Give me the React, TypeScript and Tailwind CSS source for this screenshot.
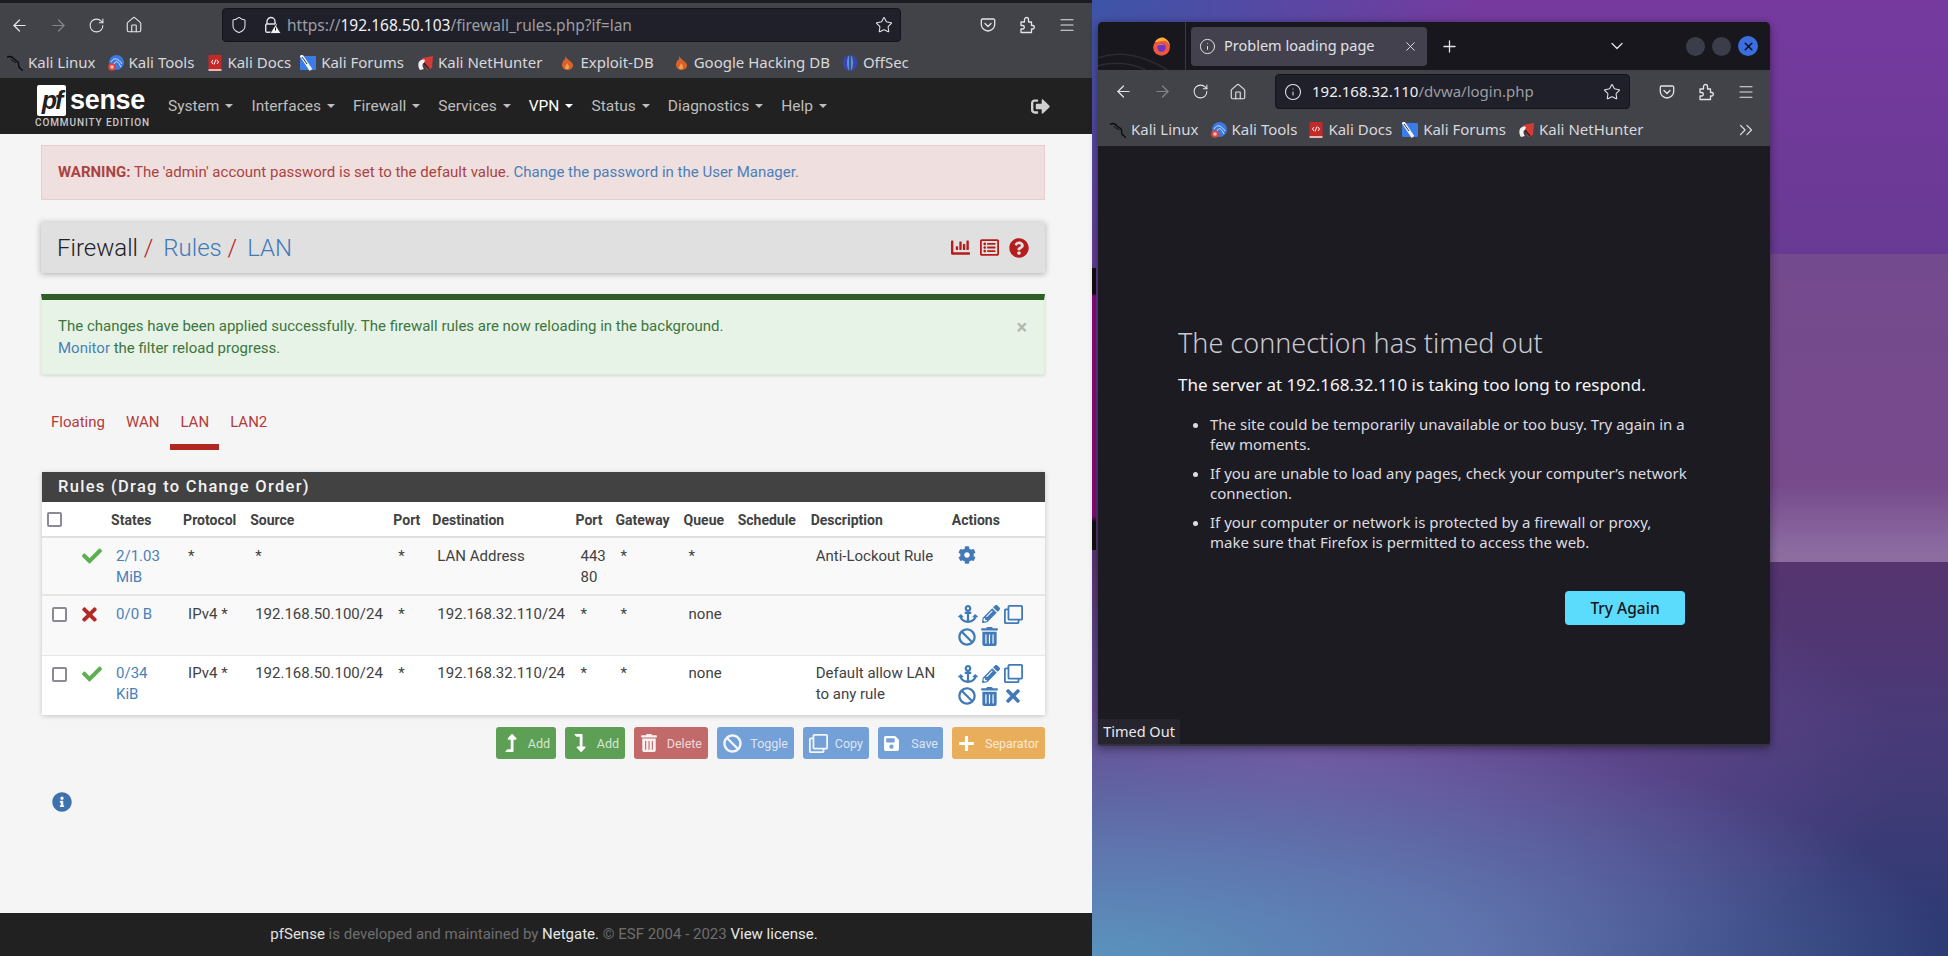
import { ArrowLeft, ArrowRight, ChevronDown, ChevronsRight, House, Info, Menu, Plus, RotateCw, Shield, Star, X } from 'lucide-react'
import {
    FaAnchor, FaBan, FaChartBar, FaCheck, FaCog, FaInfoCircle, FaLevelDownAlt, FaLevelUpAlt, FaPencilAlt,
    FaPlus, FaQuestionCircle, FaRegClone, FaRegListAlt, FaSave, FaSignOutAlt, FaTimes, FaTrashAlt,
} from 'react-icons/fa'
import type { ReactNode } from 'react'

/* bookmark favicons */
const KaliIcon = () => (
    <svg viewBox="0 0 16 16" className="h-4 w-4 shrink-0" fill="none" stroke="#0c0c10" strokeWidth="1.4" strokeLinecap="round">
        <path d="M0.5 2 C3 1 5 1.5 6.5 3.5 C8 5.5 10 5.5 11 7 C12.5 9 11 10.5 12 12 C13 13.5 14.5 14 15.5 15.5" />
        <path d="M4 4.5 C5.5 6 7 7 9 7.5" strokeWidth="1" />
    </svg>
)
const ToolsIcon = () => (
    <svg viewBox="0 0 16 16" className="h-4 w-4 shrink-0">
        <circle cx="8.5" cy="7.5" r="7.5" fill="#3b78e0" />
        <path d="M3 7 C6 2 10 3 14 9 M6 9 C8 5 10 6 13 12" stroke="#cfe0fb" strokeWidth="1" fill="none" />
        <circle cx="4" cy="12" r="3.8" fill="#e0433a" />
        <rect x="2.5" y="10.5" width="3" height="3" fill="#f5c8c4" />
    </svg>
)
const DocsIcon = () => (
    <svg viewBox="0 0 14 16" className="h-4 w-[14px] shrink-0">
        <rect x="0.5" y="0" width="13" height="14" rx="1" fill="#c62828" />
        <rect x="0.5" y="14" width="13" height="2" fill="#e8b7b0" />
        <path d="M5 5 L3.5 7 L5 9 M9 5 L10.5 7 L9 9 M8 4.5 L6 9.5" stroke="#fff" strokeWidth="1" fill="none" />
    </svg>
)
const ForumsIcon = () => (
    <svg viewBox="0 0 16 16" className="h-4 w-4 shrink-0">
        <rect x="0" y="1" width="16" height="14" rx="1" fill="#3a7de8" />
        <path d="M1 0 L11 15" stroke="#f2f2f2" strokeWidth="3.2" />
        <path d="M2 2 L7 9" stroke="#333" strokeWidth="1" />
    </svg>
)
const HunterIcon = () => (
    <svg viewBox="0 0 16 16" className="h-4 w-4 shrink-0">
        <path d="M5 3 L16 1 L15 13 L10 15 Z" fill="#d23b36" />
        <path d="M3 15 C-1 9 3 3 8 5 L7 8 C5 8 5 12 7 14 Z" fill="#f3f3f3" />
        <path d="M7 8 L12 14" stroke="#222" strokeWidth="1.2" />
    </svg>
)
const FlameIcon = () => (
    <svg viewBox="0 0 16 16" className="h-4 w-4 shrink-0">
        <path d="M6 1 C7 4 13 6 14 10 C14.5 13 11 15 8 15 C5 15 3 12 3 10 C3 8 4 7 4.5 5 C5.5 6 6.5 4 6 1 Z" fill="#d9622b" />
        <path d="M8 8 C9 10 10.5 11 10 13 C9 14.5 6.5 14.5 6 13 C5.5 11.5 7.5 10.5 8 8 Z" fill="#f0a24b" />
    </svg>
)
const OffSecIcon = () => (
    <svg viewBox="0 0 16 16" className="h-4 w-4 shrink-0">
        <ellipse cx="8" cy="8" rx="7.5" ry="8" fill="#3a45a8" />
        <ellipse cx="8" cy="8" rx="3" ry="8" fill="#5f8fe0" />
        <path d="M8 0 V16" stroke="#1c1b22" strokeWidth="1" />
    </svg>
)
const FirefoxIcon = () => (
    <svg viewBox="0 0 20 20" className="h-[19px] w-[19px]">
        <circle cx="10" cy="11" r="8.8" fill="#f0563a" />
        <path d="M3 5 C6 1 10 0 13 1 C17 3 19.5 7 18.8 11 C18 6 15 4 13 4 C9 4 6 6 3 5 Z" fill="#ffb02e" />
        <circle cx="10" cy="11" r="4.4" fill="#6a35c9" />
        <path d="M6 9 C8 6 12 7 13 9 C11 8 8 8 6 9 Z" fill="#ff8a3c" />
    </svg>
)

/* toolbar glyphs that the icon packages draw differently */
const PocketIcon = () => (
    <svg viewBox="0 0 16 16" className="h-4 w-4" fill="none" stroke="currentColor" strokeWidth="1.3" strokeLinecap="round" strokeLinejoin="round">
        <path d="M2.5 2 H13.5 A1.2 1.2 0 0 1 14.7 3.2 V7.5 C14.7 11 11.5 14 8 14 C4.5 14 1.3 11 1.3 7.5 V3.2 A1.2 1.2 0 0 1 2.5 2 Z" />
        <path d="M5 6.5 L8 9.5 L11 6.5" />
    </svg>
)
const ExtensionIcon = () => (
    <svg viewBox="0 0 18 18" className="h-[18px] w-[18px]" fill="none" stroke="currentColor" strokeWidth="1.3" strokeLinejoin="round">
        <path d="M3 6 H6.5 V3.5 A2 2 0 0 1 10.5 3.5 V6 H13.5 V9.5 H15 A1.8 1.8 0 0 1 15 13 H13.5 V16.5 H3 V13 H5 A1.8 1.8 0 0 0 5 9.5 H3 Z" />
    </svg>
)
const LockWarnIcon = () => (
    <svg viewBox="0 0 18 18" className="h-[18px] w-[18px]">
        <path d="M4 8 V5.5 A4 4 0 0 1 12 5.5 V8" fill="none" stroke="#e2e2e6" strokeWidth="1.4" />
        <rect x="2.7" y="8" width="10.6" height="8.3" rx="1.4" fill="none" stroke="#e2e2e6" strokeWidth="1.4" />
        <path d="M12.5 8.5 L18 17.5 H7 Z" fill="#f2f2f4" stroke="#1c1b22" strokeWidth="0.8" />
        <rect x="12" y="11.5" width="1" height="3" fill="#1c1b22" />
    </svg>
)

function Bookmark({ icon, label, gap }: { icon: ReactNode; label: string; gap: string }) {
    return (
        <div className={`flex items-center gap-[5px] ${gap}`}>
            {icon}
            <span className="whitespace-nowrap">{label}</span>
        </div>
    )
}

function RuleActions({ remove }: { remove?: boolean }) {
    return (
        <div className="text-[#427ab8]">
            <div className="flex h-[24px] items-center gap-[4px]">
                <FaAnchor size={20} />
                <FaPencilAlt size={18} />
                <FaRegClone size={19} />
            </div>
            <div className="flex h-[21px] items-center gap-[4px]">
                <FaBan size={18} />
                <FaTrashAlt size={19} />
                {remove && <FaTimes size={20} />}
            </div>
        </div>
    )
}

const headers = [
    ['States', 'w-[72px]'], ['Protocol', 'w-[67px]'], ['Source', 'w-[143px]'], ['Port', 'w-[39px]'],
    ['Destination', 'w-[143px]'], ['Port', 'w-[40px]'], ['Gateway', 'w-[68px]'], ['Queue', 'w-[54px]'],
    ['Schedule', 'w-[73px]'], ['Description', 'w-[141px]'], ['Actions', 'w-[97px]'],
]

const rows = [
    {
        rowClass: 'h-[58px] bg-[#f9f9f9] border-t-[2px] border-[#e0e0e0]',
        cellTop: 'pt-[8px]',
        checkbox: false,
        ok: true,
        states: ['2/1.03', 'MiB'],
        proto: '*', source: '*', port: '*', dest: 'LAN Address', dport: ['443', '80'], gw: '*', queue: '*',
        desc: ['Anti-Lockout Rule'],
    },
    {
        rowClass: 'h-[60px] bg-[#f9f9f9] border-t-[2px] border-[#e6e6e6]',
        cellTop: 'pt-[8px]',
        checkbox: true,
        ok: false,
        states: ['0/0 B'],
        proto: 'IPv4 *', source: '192.168.50.100/24', port: '*', dest: '192.168.32.110/24', dport: ['*'], gw: '*', queue: 'none',
        desc: [],
    },
    {
        rowClass: 'h-[60px] bg-white border-t border-[#e6e6e6]',
        cellTop: 'pt-[7px]',
        checkbox: true,
        ok: true,
        remove: true,
        states: ['0/34', 'KiB'],
        proto: 'IPv4 *', source: '192.168.50.100/24', port: '*', dest: '192.168.32.110/24', dport: ['*'], gw: '*', queue: 'none',
        desc: ['Default allow LAN', 'to any rule'],
    },
]

const navItems = ['System', 'Interfaces', 'Firewall', 'Services', 'VPN', 'Status', 'Diagnostics', 'Help']

function PfSenseBrowser() {
    return (
        <div className="flex h-[956px] w-[1092px] shrink-0 flex-col bg-[#f5f5f5] font-['Roboto',sans-serif] text-[15px] leading-[21px] text-[#424242]">
            {/* Firefox chrome */}
            <div className="h-[3px] bg-[#1c1b22]" />
            <div className="bg-[#424349] font-['Noto_Sans',sans-serif]">
                <div className="relative flex h-[44px] items-center text-[#e4e4e8]">
                    <div className="ml-[10px] flex w-[212px] items-center">
                        <ArrowLeft size={19} strokeWidth={1.5} />
                        <ArrowRight size={19} strokeWidth={1.5} className="ml-[20px] text-[#85858c]" />
                        <RotateCw size={17} strokeWidth={1.5} className="ml-[20px]" />
                        <House size={18} strokeWidth={1.5} className="ml-[20px]" />
                    </div>
                    <div className="flex h-[34px] w-[679px] items-center rounded border border-[#15141a] bg-[#1f2029] pl-[7px] pr-[7px]">
                        <Shield size={18} strokeWidth={1.4} />
                        <span className="ml-[15px]"><LockWarnIcon /></span>
                        <span className="ml-[6px] text-[15.5px] text-[#9d9da3]">https://<span className="text-[#f0f0f3]">192.168.50.103</span>/firewall_rules.php?if=lan</span>
                        <Star size={18} strokeWidth={1.4} className="ml-auto" />
                    </div>
                    <div className="ml-[79px] flex items-center gap-[22px]">
                        <PocketIcon />
                        <ExtensionIcon />
                        <Menu size={18} strokeWidth={1.5} />
                    </div>
                </div>
                <div className="flex h-[31px] items-center pl-[7px] text-[15px] text-[#d8d8dc]">
                    <Bookmark icon={<KaliIcon />} label="Kali Linux" gap="mr-[12px]" />
                    <Bookmark icon={<ToolsIcon />} label="Kali Tools" gap="mr-[14px]" />
                    <Bookmark icon={<DocsIcon />} label="Kali Docs" gap="mr-[9px]" />
                    <Bookmark icon={<ForumsIcon />} label="Kali Forums" gap="mr-[13px]" />
                    <Bookmark icon={<HunterIcon />} label="Kali NetHunter" gap="mr-[17px]" />
                    <Bookmark icon={<FlameIcon />} label="Exploit-DB" gap="mr-[19px]" />
                    <Bookmark icon={<FlameIcon />} label="Google Hacking DB" gap="mr-[12px]" />
                    <Bookmark icon={<OffSecIcon />} label="OffSec" gap="" />
                </div>
            </div>

            {/* pfSense navbar */}
            <nav className="flex h-[56px] items-center bg-[#212121] pr-[42px]">
                <div className="ml-[35px] w-[122px] shrink-0">
                    <div className="flex h-[34px] items-center pl-[2px]">
                        <div className="flex h-[31px] w-[29px] items-center justify-center rounded-[2px] bg-white font-['Liberation_Sans',sans-serif] text-[25px] font-bold italic leading-none tracking-[-2px] text-[#212121]">pf</div>
                        <span className="ml-[4px] font-['Liberation_Sans',sans-serif] text-[27px] font-bold leading-none tracking-[-0.3px] text-white">sense</span>
                    </div>
                    <div className="font-['Roboto',sans-serif] text-[10px] font-medium leading-[12px] tracking-[0.9px] whitespace-nowrap text-[#c8c8c8]">COMMUNITY EDITION</div>
                </div>
                <ul className="ml-[11px] flex items-center gap-[18px] text-[15.5px] text-[#bdbdbd]">
                    {navItems.map((item) => (
                        <li key={item} className={`flex items-center gap-[6px] ${item === 'VPN' ? 'text-white' : ''}`}>
                            {item}
                            <span className="h-0 w-0 border-x-[4px] border-t-[4px] border-x-transparent border-t-current" />
                        </li>
                    ))}
                </ul>
                <FaSignOutAlt size={19} className="ml-auto text-[#d0d0d0]" />
            </nav>

            {/* page */}
            <main className="flex flex-1 flex-col pl-[41px] pr-[47px]">
                <div className="mt-[11px] flex h-[55px] items-center border border-[#ebcccc] bg-[#f0dfdf] pl-[16px] pb-[1px] text-[#a94442]">
                    <p><strong className="font-bold">WARNING:</strong> The 'admin' account password is set to the default value. <a className="text-[#4a7fb8]">Change the password in the User Manager.</a></p>
                </div>

                <div className="mt-[22px] flex h-[51px] items-center bg-[#e0e0e0] pl-[16px] pr-[16px] shadow-[0_1px_6px_rgba(0,0,0,0.3)]">
                    <h1 className="text-[24px] font-light leading-none text-[#212121]">
                        Firewall <span className="text-[#b71c1c]">/</span>
                        <a className="ml-[10px] text-[#427ab8]">Rules</a> <span className="text-[#b71c1c]">/</span>
                        <a className="ml-[10px] text-[#427ab8]">LAN</a>
                    </h1>
                    <div className="ml-auto flex items-center gap-[10px] text-[#b71c1c]">
                        <FaChartBar size={19} />
                        <FaRegListAlt size={19} />
                        <FaQuestionCircle size={20} />
                    </div>
                </div>

                <div className="relative mt-[21px] h-[81px] border-x border-b border-t-[6px] border-x-[#e0eedb] border-b-[#dcebd4] border-t-[#2f5f27] bg-[#e8f3e7] pl-[16px] pt-[15px] leading-[22px] text-[#3c763d] shadow-[0_1px_3px_rgba(0,0,0,0.12)]">
                    <p>The changes have been applied successfully. The firewall rules are now reloading in the background.</p>
                    <p><a className="text-[#4a7fb8]">Monitor</a> the filter reload progress.</p>
                    <span className="absolute right-[17px] top-[16px] text-[20px] font-bold text-[#b0b8b0]">×</span>
                </div>

                <div className="mt-[25px] flex gap-[1px] text-[#b53a3a]">
                    {['Floating', 'WAN', 'LAN', 'LAN2'].map((tab) => (
                        <a key={tab} className={`h-[50px] border-b-[6px] px-[10px] pt-[12px] ${tab === 'LAN' ? 'border-[#b0281f]' : 'border-transparent'}`}>{tab}</a>
                    ))}
                </div>

                <section className="mt-[22px] ml-[1px] bg-white shadow-[0_1px_5px_rgba(0,0,0,0.2)]">
                    <h2 className="flex h-[30px] items-center bg-[#424242] pb-[1px] pl-[16px] text-[16.5px] font-medium tracking-[1.3px] text-[#f2f2f2]">Rules (Drag to Change Order)</h2>
                    <table className="w-full table-fixed border-collapse">
                        <colgroup>
                            <col className="w-[24px]" />
                            <col className="w-[41px]" />
                            {headers.map(([label, width], i) => <col key={i} className={width} aria-label={label} />)}
                        </colgroup>
                        <thead>
                            <tr className="h-[35px] text-[14px]">
                                <th className="pl-[5px] text-left" colSpan={2}>
                                    <span className="block h-[15px] w-[15px] rounded-[2px] border-2 border-[#8a8a99] bg-white" />
                                </th>
                                {headers.map(([label], i) => (
                                    <th key={i} className="pl-[4px] pt-[3px] text-left font-bold whitespace-nowrap">{label}</th>
                                ))}
                            </tr>
                        </thead>
                        <tbody className="align-top">
                            {rows.map((row, i) => (
                                <tr key={i} className={row.rowClass}>
                                    <td className="pl-[10px] pt-[11px]">
                                        {row.checkbox && <span className="block h-[15px] w-[15px] rounded-[2px] border-2 border-[#8a8a99] bg-white" />}
                                    </td>
                                    <td className="pl-[13px] pt-[8px]">
                                        {row.ok ? <FaCheck size={20} className="ml-[3px] text-[#5cb050]" /> : <FaTimes size={21} className="text-[#b22a25]" />}
                                    </td>
                                    <td className={`pl-[9px] text-[#4a7fb8] ${row.cellTop}`}>{row.states.map((s) => <div key={s}>{s}</div>)}</td>
                                    <td className={`pl-[9px] ${row.cellTop}`}>{row.proto}</td>
                                    <td className={`pl-[9px] ${row.cellTop}`}>{row.source}</td>
                                    <td className={`pl-[9px] ${row.cellTop}`}>{row.port}</td>
                                    <td className={`pl-[9px] whitespace-nowrap ${row.cellTop}`}>{row.dest}</td>
                                    <td className={`pl-[9px] ${row.cellTop}`}>{row.dport.map((p) => <div key={p}>{p}</div>)}</td>
                                    <td className={`pl-[9px] ${row.cellTop}`}>{row.gw}</td>
                                    <td className={`pl-[9px] ${row.cellTop}`}>{row.queue}</td>
                                    <td />
                                    <td className={`pl-[9px] whitespace-nowrap ${row.cellTop}`}>{row.desc.map((d) => <div key={d}>{d}</div>)}</td>
                                    <td className="pl-[10px] pt-[6px]">
                                        {i === 0 ? <FaCog size={18} className="mt-[2px] text-[#427ab8]" /> : <RuleActions remove={row.remove} />}
                                    </td>
                                </tr>
                            ))}
                        </tbody>
                    </table>
                </section>

                <div className="mt-[12px] flex justify-end gap-[9px] text-[12.5px] text-white/75">
                    <button className="flex h-[32px] w-[60px] items-center justify-between rounded-[3px] bg-[#5d9f55] px-[6px]"><FaLevelUpAlt size={18} className="text-white" />Add</button>
                    <button className="flex h-[32px] w-[60px] items-center justify-between rounded-[3px] bg-[#5d9f55] px-[6px]"><FaLevelDownAlt size={18} className="text-white" />Add</button>
                    <button className="flex h-[32px] w-[74px] items-center justify-between rounded-[3px] bg-[#c26a6a] px-[6px]"><FaTrashAlt size={18} className="text-white/90" />Delete</button>
                    <button className="flex h-[32px] w-[77px] items-center justify-between rounded-[3px] bg-[#74a0d8] px-[6px]"><FaBan size={19} className="text-white/90" />Toggle</button>
                    <button className="flex h-[32px] w-[66px] items-center justify-between rounded-[3px] bg-[#74a0d8] px-[6px]"><FaRegClone size={19} className="text-white/90" />Copy</button>
                    <button className="flex h-[32px] w-[65px] items-center justify-between rounded-[3px] bg-[#74a0d8] px-[5px]"><FaSave size={17} className="text-white" />Save</button>
                    <button className="flex h-[32px] w-[93px] items-center justify-between rounded-[3px] bg-[#e8ae5c] px-[6px]"><FaPlus size={17} className="text-white" />Separator</button>
                </div>

                <FaInfoCircle size={20} className="ml-[11px] mt-[33px] text-[#3d72ae]" />
            </main>

            <footer className="flex h-[43px] items-center justify-center bg-[#212121] pr-[4px] text-[#6e6e6e]">
                <p><span className="text-[#e0e0e0]">pfSense</span> is developed and maintained by <a className="text-[#e8e8e8]">Netgate.</a> © ESF 2004 - 2023 <a className="text-[#e8e8e8]">View license.</a></p>
            </footer>
        </div>
    )
}

function TimedOutBrowser() {
    return (
        <div className="ml-[2px] mt-[22px] flex h-[724px] w-[672px] shrink-0 flex-col overflow-hidden rounded-t-[5px] rounded-b-[3px] border-b-2 border-[#34333b] bg-[#1c1b22] font-['Noto_Sans',sans-serif] shadow-[0_2px_10px_rgba(0,0,0,0.45)]">
            <div className="flex h-[48px] shrink-0 items-center bg-[#17171d] text-[#e4e4e8]">
                <div className="relative flex h-full w-[88px] items-center justify-end border-r border-[#3a3a42] pr-[14px]">
                    {/* wallpaper lines of the Kali theme */}
                    <svg viewBox="0 0 88 48" className="absolute inset-0 h-full w-full" fill="none" stroke="#2b2b33" strokeWidth="1.5">
                        <path d="M0 36 C20 30 40 30 70 48" />
                        <path d="M0 44 C15 40 30 40 48 48" />
                    </svg>
                    <span className="relative"><FirefoxIcon /></span>
                </div>
                <div className="ml-[5px] flex h-[39px] w-[236px] items-center rounded bg-[#42414d] px-[8px]">
                    <Info size={17} strokeWidth={1.4} />
                    <span className="ml-[8px] text-[14.5px] text-[#e0e0e6]">Problem loading page</span>
                    <X size={15} strokeWidth={1.5} className="ml-auto mr-[1px]" />
                </div>
                <Plus size={19} strokeWidth={1.6} className="ml-[13px]" />
                <ChevronDown size={20} strokeWidth={1.5} className="ml-[148px]" />
                <div className="ml-[59px] flex items-center gap-[7px]">
                    <span className="h-[19px] w-[19px] rounded-full bg-[#3b3d4a]" />
                    <span className="h-[19px] w-[19px] rounded-full bg-[#3b3d4a]" />
                    <span className="flex h-[20px] w-[20px] items-center justify-center rounded-full bg-[#3b6fe0] text-[#101020]"><X size={13} strokeWidth={3} /></span>
                </div>
            </div>

            <div className="bg-[#424349] text-[#e4e4e8]">
                <div className="flex h-[43px] items-center">
                    <div className="ml-[16px] flex w-[161px] items-center">
                        <ArrowLeft size={19} strokeWidth={1.5} />
                        <ArrowRight size={19} strokeWidth={1.5} className="ml-[20px] text-[#85858c]" />
                        <RotateCw size={17} strokeWidth={1.5} className="ml-[20px]" />
                        <House size={18} strokeWidth={1.5} className="ml-[20px]" />
                    </div>
                    <div className="flex h-[35px] w-[355px] items-center rounded border border-[#15141a] bg-[#1f2029] pl-[8px] pr-[8px]">
                        <Info size={18} strokeWidth={1.4} />
                        <span className="ml-[10px] text-[15px] text-[#9d9da3]"><span className="text-[#f0f0f3]">192.168.32.110</span>/dvwa/login.php</span>
                        <Star size={18} strokeWidth={1.4} className="ml-auto" />
                    </div>
                    <div className="ml-[29px] flex items-center gap-[22px]">
                        <PocketIcon />
                        <ExtensionIcon />
                        <Menu size={18} strokeWidth={1.5} />
                    </div>
                </div>
                <div className="flex h-[33px] items-center pl-[12px] pr-[13px] text-[15px] text-[#d8d8dc]">
                    <Bookmark icon={<KaliIcon />} label="Kali Linux" gap="mr-[12px]" />
                    <Bookmark icon={<ToolsIcon />} label="Kali Tools" gap="mr-[12px]" />
                    <Bookmark icon={<DocsIcon />} label="Kali Docs" gap="mr-[10px]" />
                    <Bookmark icon={<ForumsIcon />} label="Kali Forums" gap="mr-[12px]" />
                    <Bookmark icon={<HunterIcon />} label="Kali NetHunter" gap="" />
                    <ChevronsRight size={22} strokeWidth={1.4} className="ml-auto" />
                </div>
            </div>

            <div className="flex flex-1 flex-col">
                <div className="ml-[80px] mt-[178px] w-[507px]">
                    <h1 className="text-[27px] font-light leading-[38px] text-[#c9c9ce]">The connection has timed out</h1>
                    <p className="mt-[11px] text-[17px] leading-[24px] text-[#f5f5f8]">The server at 192.168.32.110 is taking too long to respond.</p>
                    <ul className="-mr-[8px] mt-[17px] list-disc pl-[32px] text-[15px] leading-[20.4px] text-[#dcdce0]">
                        <li>The site could be temporarily unavailable or too busy. Try again in a few moments.</li>
                        <li className="mt-[8px]">If you are unable to load any pages, check your computer’s network connection.</li>
                        <li className="mt-[8px]">If your computer or network is protected by a firewall or proxy, make sure that Firefox is permitted to access the web.</li>
                    </ul>
                    <div className="mt-[39px] flex justify-end">
                        <button className="h-[34px] w-[120px] rounded-[4px] bg-[#5cdcfc] text-[15.5px] font-medium text-[#15141a]">Try Again</button>
                    </div>
                </div>
                <div className="mt-auto flex h-[25px] w-[82px] items-center justify-center rounded-tr-[4px] bg-[#26252d] text-[14.5px] text-[#e8e8ea]">Timed Out</div>
            </div>
        </div>
    )
}

export default function App() {
    return (
        <div className="relative flex h-[956px] w-[1948px] overflow-hidden bg-[#4a3a78]">
            {/* wallpaper, only the part right of the first browser shows */}
            <div className="absolute left-[1092px] top-0 h-[956px] w-[856px] bg-[radial-gradient(ellipse_45%_30%_at_0%_0%,#3c55a8_0%,transparent_100%),radial-gradient(ellipse_100%_26%_at_0%_100%,#5a93bd_0%,#5f74ae_45%,transparent_100%),radial-gradient(ellipse_70%_25%_at_25%_80%,#76519e_0%,transparent_100%),linear-gradient(180deg,#763a9f_0%,#673a92_30%,#55346f_60%,#4a3a78_75%,#2b3b74_100%)]" />
            <div className="absolute left-[1770px] top-[254px] h-[308px] w-[178px] bg-[linear-gradient(180deg,#744a8e_0%,#774a8c_75%,#8a6aa0_95%,#8e6c9f_100%)]" />

            <PfSenseBrowser />
            {/* edge of another window showing between the two browsers */}
            <div className="z-10 mt-[268px] h-[282px] w-[4px] shrink-0 bg-[linear-gradient(180deg,#101014_0%,#101014_9%,#8a0a78_10%,#8a0a78_88%,#101014_90%)]" />
            <div className="z-10"><TimedOutBrowser /></div>
        </div>
    )
}
